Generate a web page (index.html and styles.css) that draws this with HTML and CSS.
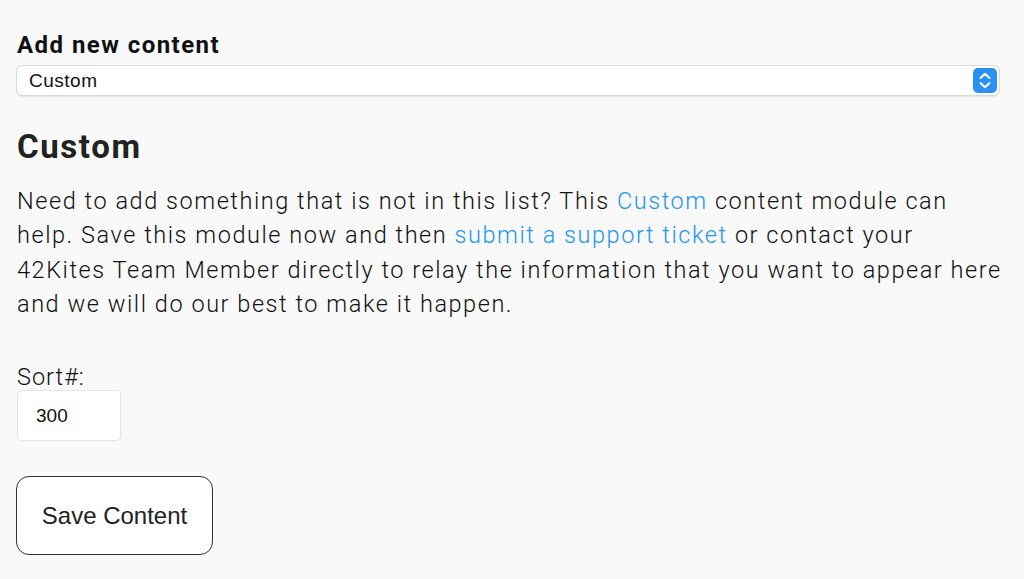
FILE: index.html
```html
<!DOCTYPE html>
<html>
<head>
<meta charset="utf-8">
<link rel="stylesheet" href="styles.css">
</head>
<body>
<div class="page">
  <h3 class="label-title">Add new content</h3>
  <div class="select">
    <span class="select-value">Custom</span>
    <span class="select-arrow">
      <svg width="24" height="25" viewBox="0 0 24 25">
        <rect x="0" y="0" width="24" height="25" rx="5" fill="#2a90f4"/>
        <path d="M7.5 10 L12 5.8 L16.5 10" fill="none" stroke="#fff" stroke-width="2" stroke-linecap="round" stroke-linejoin="round"/>
        <path d="M7.5 15 L12 19.2 L16.5 15" fill="none" stroke="#fff" stroke-width="2" stroke-linecap="round" stroke-linejoin="round"/>
      </svg>
    </span>
  </div>
  <h2 class="title">Custom</h2>
  <p class="desc">Need to add something that is not in this list? This <a href="#">Custom</a> content module can help. Save this module now and then <a href="#">submit a support ticket</a> or contact your 42Kites Team Member directly to relay the information that you want to appear here and we will do our best to make it happen.</p>
  <label class="sort-label">Sort#:</label>
  <div class="sort-input">300</div>
  <button class="save-btn">Save Content</button>
</div>
</body>
</html>
```

FILE: styles.css
```css
html, body {
  margin: 0;
  padding: 0;
  background: #f9f9f9;
}
.page {
  padding: 0 24px 0 16px;
  font-family: Roboto, "Liberation Sans", sans-serif;
  color: #222;
  display: flex;
  flex-direction: column;
  align-items: flex-start;
}
.label-title {
  margin: 30px 0 0 1px;
  font-size: 24px;
  font-weight: 700;
  letter-spacing: 1.45px;
  line-height: 30px;
  color: #111;
}
.select {
  margin-top: 5px;
  align-self: stretch;
  height: 31px;
  box-sizing: border-box;
  background: #fff;
  border: 1px solid #d7d9dc;
  border-radius: 6px;
  box-shadow: 0 1px 1px rgba(0,0,0,0.08);
  display: flex;
  align-items: center;
  justify-content: space-between;
  padding: 0 2px 0 12px;
  font-family: "Liberation Sans", Arial, sans-serif;
  font-size: 19px;
  letter-spacing: 0.5px;
  color: #111;
}
.select-arrow {
  display: flex;
}
.title {
  margin: 31px 0 0 1px;
  font-size: 33px;
  font-weight: 700;
  letter-spacing: 1.6px;
  line-height: 40px;
  color: #222;
}
.desc {
  margin: 17px -6px 0 1px;
  font-size: 23.5px;
  font-weight: 300;
  letter-spacing: 1.55px;
  line-height: 34.3px;
  color: #111;
}
.desc a {
  color: #2196f3;
  text-decoration: none;
}
.sort-label {
  margin: 42px 0 0 1px;
  font-size: 23.5px;
  font-weight: 300;
  letter-spacing: 1px;
  line-height: 28px;
  color: #111;
}
.sort-input {
  margin-top: -1px;
  margin-left: 1px;
  width: 104px;
  height: 51px;
  box-sizing: border-box;
  background: #fff;
  border: 1px solid #dfe6ec;
  border-radius: 4px;
  padding: 0 18px;
  display: flex;
  align-items: center;
  font-family: "Liberation Sans", Arial, sans-serif;
  font-size: 19px;
  color: #111;
}
.save-btn {
  margin-top: 35px;
  width: 197px;
  height: 79px;
  background: #fff;
  border: 1.5px solid #333;
  border-radius: 13px;
  font-family: "Liberation Sans", Arial, sans-serif;
  font-size: 24px;
  color: #222;
  padding: 0;
}
```
